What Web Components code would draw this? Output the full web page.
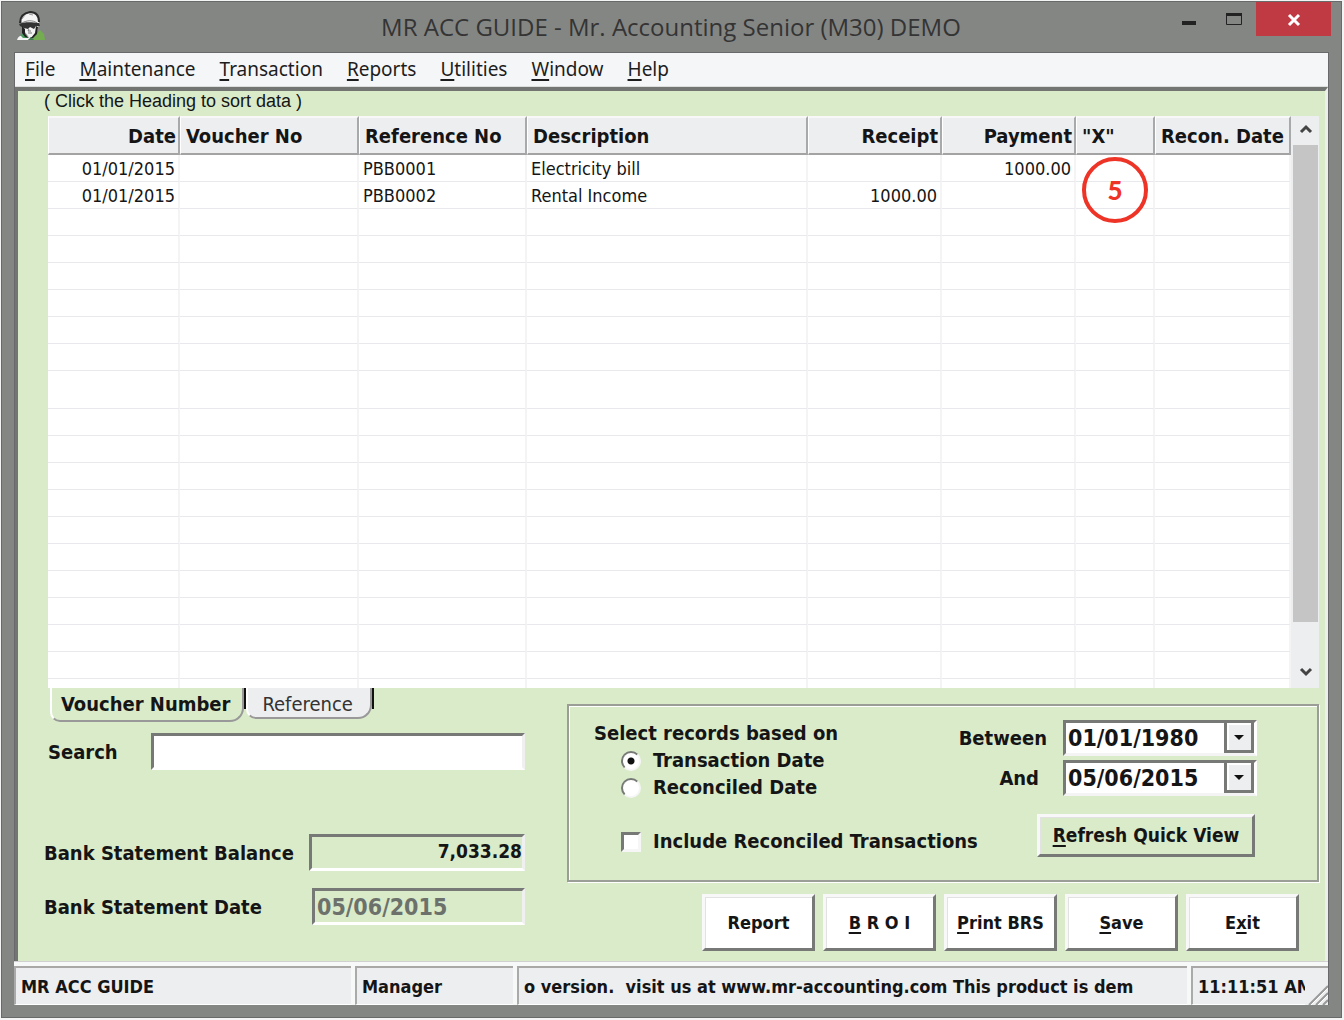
<!DOCTYPE html>
<html lang="en">
<head>
<meta charset="utf-8">
<title>MR ACC GUIDE</title>
<style>
  body {
    margin: 0;
    min-height: 100vh;
    display: flex;
    flex-direction: column;
    background: #f4f4f4;
    color: #151515;
    font-family: "DejaVu Sans Condensed", "DejaVu Sans", sans-serif;
    --green: #daebca;
    --face: #edeef0;
    --frame: #848684;
    --shade: #777977;
  }
</style>
</head>
<body>
<app-window>
  <span slot="title">MR ACC GUIDE - Mr. Accounting Senior (M30) DEMO</span>
  <menu-bar></menu-bar>
  <reconcile-form></reconcile-form>
  <status-bar></status-bar>
</app-window>

<script>
function template (html) {
  const el = document.createElement('template')
  el.innerHTML = html
  return el
}

class BaseElement extends HTMLElement {
  constructor () {
    super()
    this.attachShadow({ mode: 'open' })
    this.shadowRoot.appendChild(this.constructor.template.content.cloneNode(true))
  }
}

class AppWindow extends BaseElement {
  static template = template(`
    <style>
      :host {
        flex: 1;
        display: flex;
        flex-direction: column;
        margin: 1px 2px 2px 1px;
        border: 1px solid #686a69;
        background: var(--frame);
      }
      header {
        display: flex;
        height: 50px;
        padding: 0 10px 0 14px;
      }
      .logo { margin-top: 9px; }
      h1 {
        flex: 1;
        margin: 0;
        padding-left: 128px;
        text-align: center;
        font: 24px/49px "Open Sans", "Noto Sans", sans-serif;
        color: #343434;
        white-space: nowrap;
      }
      .controls {
        display: flex;
        height: 34px;
      }
      .controls button {
        width: 45px;
        padding: 0;
        border: 0;
        background: none;
      }
      .controls .close {
        width: 75px;
        background: #bf3a43;
      }
      svg { display: block; margin: 0 auto; }
      main {
        flex: 1;
        display: flex;
        flex-direction: column;
        margin: 0 12px 12px;
        border: 1px solid #69696b;
        border-width: 1px 1px 0;
      }
    </style>
    <header>
      <svg class="logo" width="32" height="32" viewBox="0 0 32 32">
        <path d="M1 29c1-4 5-5 8-6l6 4-3 2H1z" fill="#f4f4f4"/>
        <path d="M4 24l5-2 3 5-5 0z" fill="#4b9b5c"/>
        <path d="M17 29l2-5 5-5 4 4 1 6H18z" fill="#73ad50"/>
        <path d="M12 29l3-3 3 3z" fill="#3f7d4d"/>
        <path d="M5 9C6 3 10 2 14 2c6 0 9 4 9 10l-2 9-4 5h-4l-5-6-1-5z" fill="#f4f4f4"/>
        <path d="M4 12C4 5 8 2 14 1c6 0 9 4 9 10" fill="none" stroke="#2a2a2a" stroke-width="2"/>
        <path d="M6 12c5-3 11-3 15 0" fill="none" stroke="#888" stroke-width="1"/>
        <path d="M3 13c5-2 11-2 20-1l1 3-4 0-2 3-4-2-2 2-4-1-4-2z" fill="#333"/>
        <path d="M6 15l3 3 0 5 4 4-4-1-3-4zM20 15l2 1-1 7-4 4-2 0 4-5z" fill="#222"/>
        <path d="M9 4l-3 4M13 3l4 1" stroke="#999" stroke-width="1" fill="none"/>
        <path d="M12 22l4 0M13 18l-1 2 3 0" stroke="#777" fill="none"/>
      </svg>
      <h1><slot name="title"></slot></h1>
      <div class="controls">
        <button aria-label="Minimize"><svg width="16" height="16"><path d="M1 10h14v4H1z" fill="#222"/></svg></button>
        <button aria-label="Maximize"><svg width="18" height="16"><path d="M1.500 2.500h15v11h-15z" fill="none" stroke="#222"/><path d="M1 2h16v3H1z" fill="#222"/></svg></button>
        <button class="close" aria-label="Close"><svg width="16" height="16"><path d="M3 4l10 10M13 4L3 14" stroke="#fff" stroke-width="3"/></svg></button>
      </div>
    </header>
    <main><slot></slot></main>
  `)
}

class MenuBar extends BaseElement {
  static template = template(`
    <style>
      :host {
        display: block;
        height: 33px;
        background: #f5f6f8;
        border-bottom: 1px solid #ddd;
      }
      nav {
        display: flex;
        gap: 24px;
        padding-left: 10px;
      }
      button {
        padding: 0;
        border: 0;
        background: none;
        font: 19px/32px "Noto Sans", sans-serif;
        color: #1d1d1d;
      }
      u { text-underline-offset: 3px; text-decoration-thickness: 2px; }
    </style>
    <nav>
      <button><u>F</u>ile</button>
      <button><u>M</u>aintenance</button>
      <button><u>T</u>ransaction</button>
      <button><u>R</u>eports</button>
      <button><u>U</u>tilities</button>
      <button><u>W</u>indow</button>
      <button><u>H</u>elp</button>
    </nav>
  `)
}

class RecordGrid extends BaseElement {
  static template = template(`
    <style>
      :host {
        display: flex;
        position: relative;
        height: 572px;
        background: #fff;
        overflow: hidden;
      }
      .rows { flex: 1; height: 572px; overflow: hidden; }
      table {
        width: 100%;
        table-layout: fixed;
        border-collapse: separate;
        border-spacing: 0;
      }
      th, td {
        box-sizing: border-box;
        text-align: left;
        white-space: nowrap;
        overflow: hidden;
      }
      th {
        height: 39px;
        padding: 0 3px 0 5px;
        background: var(--face);
        border-top: 2px solid #f8f8f8;
        border-right: 2px solid #a8a9aa;
        border-bottom: 2px solid #a3a3a3;
        border-left: 1px solid #fff;
        font-size: 20px;
        font-weight: bold;
      }
      td {
        height: 27px;
        padding: 1px 4px 0;
        border-right: 2px solid #f4f4f5;
        border-bottom: 1px solid #e8e9ec;
        font-size: 18px;
        line-height: 25px;
      }
      tr.tall td { height: 38px; }
      th.num { text-align: right; padding-right: 2px; }
      td.num { text-align: right; padding-right: 3px; }
      .scroll {
        display: flex;
        flex-direction: column;
        width: 28px;
        padding: 0 1px 0 2px;
        box-sizing: border-box;
        background: var(--face);
      }
      .scroll button {
        height: 29px;
        padding: 0;
        border: 0;
        background: none;
      }
      .thumb { height: 477px; background: #c5c5c5; }
      .track { flex: 1; }
      .step {
        position: absolute;
        top: 41px;
        right: 171px;
        box-sizing: border-box;
        width: 66px;
        height: 66px;
        border: 4px solid #ee3327;
        border-radius: 50%;
        color: #ee3327;
        font: 900 26px/58px Lato, sans-serif;
        text-align: center;
      }
    </style>
    <div class="rows">
      <table>
        <colgroup></colgroup>
        <thead><tr></tr></thead>
        <tbody></tbody>
      </table>
    </div>
    <div class="scroll">
      <button aria-label="Scroll up"><svg width="14" height="14"><path d="M2 10l5-5 5 5" fill="none" stroke="#444" stroke-width="3"/></svg></button>
      <div class="thumb"></div>
      <div class="track"></div>
      <button aria-label="Scroll down"><svg width="14" height="14"><path d="M2 4l5 5 5-5" fill="none" stroke="#444" stroke-width="3"/></svg></button>
    </div>
    <div class="step">5</div>
  `)

  connectedCallback () {
    const columns = [
      { name: 'Date', width: 132, num: true },
      { name: 'Voucher No', width: 179 },
      { name: 'Reference No', width: 168 },
      { name: 'Description' },
      { name: 'Receipt', width: 134, num: true },
      { name: 'Payment', width: 134, num: true },
      { name: '"X"', width: 79 },
      { name: 'Recon. Date', width: 136 }
    ]
    const records = [
      ['01/01/2015', '', 'PBB0001', 'Electricity bill', '', '1000.00', '', ''],
      ['01/01/2015', '', 'PBB0002', 'Rental Income', '1000.00', '', '', '']
    ]
    const root = this.shadowRoot
    const head = root.querySelector('thead tr')
    const body = root.querySelector('tbody')

    columns.forEach(column => {
      const col = document.createElement('col')
      if (column.width) col.style.width = column.width + 'px'
      root.querySelector('colgroup').appendChild(col)

      const th = document.createElement('th')
      th.textContent = column.name
      if (column.num) th.className = 'num'
      head.appendChild(th)
    })

    for (let i = 0; i < 20; i++) {
      const tr = body.insertRow()
      if (i === 8) tr.className = 'tall'
      columns.forEach((column, c) => {
        const td = tr.insertCell()
        td.textContent = records[i] ? records[i][c] : ''
        if (column.num) td.className = 'num'
      })
    }
  }
}

class TabStrip extends BaseElement {
  static template = template(`
    <style>
      :host { display: flex; align-items: flex-start; height: 34px; }
      button {
        box-sizing: border-box;
        height: 31px;
        padding: 0 17px 0 14px;
        border: 1px solid #999;
        border-width: 0 2px 2px 2px;
        border-left-color: #fff;
        border-radius: 0 0 14px 10px;
        background: var(--face);
        color: #333;
        font: 20px/32px "DejaVu Sans Condensed", sans-serif;
      }
      button[aria-selected="true"] {
        height: 34px;
        padding: 0 12px 0 9px;
        background: none;
        color: #151515;
        font-weight: bold;
      }
      i { width: 2px; height: 21px; background: #111; }
    </style>
    <button role="tab" aria-selected="true">Voucher Number</button><i></i>
    <button role="tab" aria-selected="false">Reference</button><i></i>
  `)
}

class PushButton extends BaseElement {
  static template = template(`
    <style>
      :host { display: block; }
      button {
        display: block;
        box-sizing: border-box;
        width: 100%;
        height: 100%;
        padding: 0;
        border: 3px solid;
        border-color: #f8f8f8 var(--shade) var(--shade) #f8f8f8;
        background: var(--button-face, #fff);
        color: inherit;
        font: inherit;
        box-shadow: inset 1px 1px #e2e2e2;
      }
      ::slotted(u) { text-underline-offset: 3px; text-decoration-thickness: 2px; }
    </style>
    <button><slot></slot></button>
  `)
}

class DateField extends BaseElement {
  static template = template(`
    <style>
      :host { display: flex; align-items: center; justify-content: flex-end; }
      label { font-size: 20px; font-weight: bold; }
      .box {
        display: flex;
        box-sizing: border-box;
        width: 194px;
        height: 36px;
        border: 3px solid;
        border-color: var(--shade) #fff #f4f4f4 var(--shade);
        background: #fff;
      }
      input {
        flex: 1;
        min-width: 0;
        padding: 0 2px;
        border: 0;
        background: none;
        color: #151515;
        font: bold 23px "DejaVu Sans Condensed", sans-serif;
        outline: 0;
      }
      button {
        width: 30px;
        padding: 0;
        border: 3px solid var(--shade);
        border-top-width: 0;
        background: var(--face);
        box-shadow: inset 2px 2px #fff;
      }
      svg { display: block; margin: 2px auto 0; }
    </style>
    <label for="date"></label>
    <div class="box">
      <input id="date">
      <button aria-label="Open calendar"><svg width="10" height="5"><path d="M0 0h10L5 5z" fill="#111"/></svg></button>
    </div>
  `)

  connectedCallback () {
    const label = this.shadowRoot.querySelector('label')
    label.textContent = this.getAttribute('label')
    label.style.marginRight = this.getAttribute('gap') + 'px'
    this.shadowRoot.querySelector('input').value = this.getAttribute('value')
  }
}

class FilterBox extends BaseElement {
  static template = template(`
    <style>
      :host { display: block; }
      fieldset {
        display: flex;
        justify-content: space-between;
        box-sizing: border-box;
        height: 178px;
        margin: 0;
        padding: 14px 60px 0 25px;
        border: 2px solid #9b9d97;
        box-shadow: inset 1px 1px #fff, 1px 1px #fff;
        font-size: 20px;
        font-weight: bold;
        line-height: 27px;
        white-space: nowrap;
      }
      .options, .dates { display: flex; flex-direction: column; }
      .options { width: 0; }
      .options label { display: flex; align-items: center; }
      input {
        flex: none;
        appearance: none;
        width: 20px;
        height: 20px;
        margin: 0 12px 0 27px;
        border: 3px solid;
        border-color: var(--shade) #f6f6f6 #f6f6f6 var(--shade);
        background: #fff;
      }
      input[type="radio"] { border-radius: 50%; border-width: 2px; }
      input[type="radio"]:checked {
        background: radial-gradient(circle, #111 3px, #fff 4px);
      }
      .check { margin-top: 27px; }
      .dates { align-items: flex-end; gap: 4px; }
      push-button {
        width: 218px;
        height: 43px;
        margin: 14px 2px 0 0;
        --button-face: var(--green);
        font-size: 19px;
      }
    </style>
    <fieldset>
      <div class="options">
        <span>Select records based on</span>
        <label><input type="radio" name="basis" checked>Transaction Date</label>
        <label><input type="radio" name="basis">Reconciled Date</label>
        <label class="check"><input type="checkbox">Include Reconciled Transactions</label>
      </div>
      <div class="dates">
        <date-field label="Between" value="01/01/1980" gap="16"></date-field>
        <date-field label="And" value="05/06/2015" gap="24"></date-field>
        <push-button><u>R</u>efresh Quick View</push-button>
      </div>
    </fieldset>
  `)
}

class ReconcileForm extends BaseElement {
  static template = template(`
    <style>
      :host {
        flex: 1;
        display: block;
        padding: 0 6px 0 30px;
        background: var(--green);
        border: solid #737573;
        border-width: 4px 3px 0 3px;
        border-right-color: #edf0ea;
      }
      .hint {
        margin: 0 0 0 -4px;
        padding-bottom: 4px;
        font: 18px/21px "Liberation Sans", sans-serif;
      }
      .lower {
        display: grid;
        grid-template-columns: 477px 1fr;
        column-gap: 42px;
      }
      .field {
        display: flex;
        align-items: center;
        justify-content: space-between;
        font-size: 20px;
        font-weight: bold;
      }
      .fields { margin-left: -4px; }
      tab-strip { margin-left: 6px; }
      .field input {
        box-sizing: border-box;
        width: 216px;
        height: 37px;
        padding: 0 1px;
        border: 3px solid;
        border-color: var(--shade) #f0f0f0 #fff var(--shade);
        background: none;
        color: #151515;
        font: bold 19px "DejaVu Sans Condensed", sans-serif;
        outline: 0;
      }
      .field.search { margin-top: 11px; padding-left: 4px; }
      .field.search input { width: 374px; background: #fff; }
      .balance { margin-top: 64px; }
      .balance input { padding: 0 0 4px; text-align: right; }
      .date { margin-top: 17px; }
      .field.date input { width: 213px; padding-left: 2px; font-size: 23px; color: #6d716b; }
      filter-box { margin-top: 16px; }
      .actions {
        display: flex;
        justify-content: flex-end;
        gap: 8px;
        margin: 12px 20px 0 0;
        font-size: 18px;
        font-weight: bold;
      }
      .actions push-button { width: 113px; height: 57px; }
    </style>
    <p class="hint">( Click the Heading to sort data )</p>
    <record-grid></record-grid>
    <div class="lower">
      <div class="fields">
        <tab-strip></tab-strip>
        <div class="field search"><label for="search">Search</label><input id="search"></div>
        <div class="field balance"><label for="balance">Bank Statement Balance</label><input id="balance" value="7,033.28"></div>
        <div class="field date"><label for="date">Bank Statement Date</label><input id="date" value="05/06/2015" readonly></div>
      </div>
      <div>
        <filter-box></filter-box>
        <div class="actions">
          <push-button>Report</push-button>
          <push-button><u>B</u> R O I</push-button>
          <push-button><u>P</u>rint BRS</push-button>
          <push-button><u>S</u>ave</push-button>
          <push-button>E<u>x</u>it</push-button>
        </div>
      </div>
    </div>
  `)
}

class StatusBar extends BaseElement {
  static template = template(`
    <style>
      :host {
        display: flex;
        gap: 4px;
        height: 39px;
        margin-left: -1px;
        padding-top: 4px;
        border-top: 1px solid #d0d0d0;
        background: #f7f8f8;
        font-size: 18px;
        font-weight: bold;
        line-height: 38px;
      }
      span {
        box-sizing: border-box;
        padding-left: 5px;
        border-top: 2px solid #aaa7a7;
        border-left: 2px solid #aaa;
        border-bottom: 1px solid #fff;
        background: var(--face);
        white-space: pre;
        overflow: hidden;
      }
      .company { width: 337px; }
      .user { width: 158px; }
      .ticker { flex: 1; }
      .clock { width: 114px; }
      .grip {
        width: 23px;
        margin-left: -4px;
        border-top: 2px solid #aaa7a7;
        background: var(--face);
      }
      svg { display: block; margin: 17px 0 0 3px; }
    </style>
    <span class="company">MR ACC GUIDE</span>
    <span class="user">Manager</span>
    <span class="ticker">o version.  visit us at www.mr-accounting.com This product is dem</span>
    <span class="clock">11:11:51 AM</span>
    <div class="grip"><svg width="20" height="20"><path d="M1 20L20 1M8 20L20 8M15 20l5-5" stroke="#999" stroke-width="2"/><path d="M3 20L20 3M10 20L20 10" stroke="#fff" stroke-width="1"/></svg></div>
  `)
}

customElements.define('push-button', PushButton)
customElements.define('date-field', DateField)
customElements.define('tab-strip', TabStrip)
customElements.define('filter-box', FilterBox)
customElements.define('record-grid', RecordGrid)
customElements.define('reconcile-form', ReconcileForm)
customElements.define('menu-bar', MenuBar)
customElements.define('status-bar', StatusBar)
customElements.define('app-window', AppWindow)
</script>
</body>
</html>
